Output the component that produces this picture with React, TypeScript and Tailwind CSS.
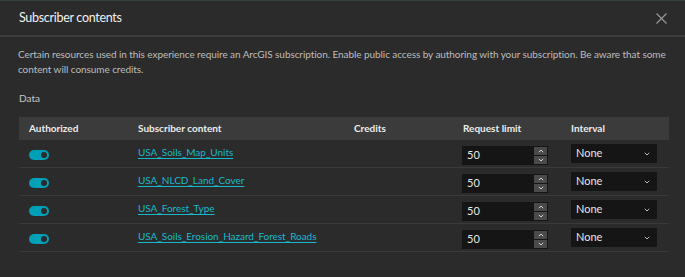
import React from "react";

const rows = [
  "USA_Soils_Map_Units",
  "USA_NLCD_Land_Cover",
  "USA_Forest_Type",
  "USA_Soils_Erosion_Hazard_Forest_Roads",
];

function Toggle() {
  return (
    <div className="w-[20px] h-[10px] rounded-full bg-[#00a0b8] flex items-center justify-end pr-[2px]">
      <div className="w-[6px] h-[6px] rounded-full bg-[#2b2b2b]" />
    </div>
  );
}

function NumberInput() {
  return (
    <div className="w-[86px] h-[19px] bg-[#151515] flex items-stretch">
      <div className="flex-1 flex items-center pl-[5px] text-[11px] text-[#e6e6e6]">50</div>
      <div className="w-[14px] flex flex-col gap-[1px] py-[1px] pr-[1px]">
        <div className="flex-1 bg-[#4a4a4a] flex items-center justify-center">
          <svg width="6" height="4" viewBox="0 0 6 4"><path d="M0.8 3.2 L3 1 L5.2 3.2" stroke="#d0d0d0" strokeWidth="1" fill="none" /></svg>
        </div>
        <div className="flex-1 bg-[#4a4a4a] flex items-center justify-center">
          <svg width="6" height="4" viewBox="0 0 6 4"><path d="M0.8 0.8 L3 3 L5.2 0.8" stroke="#d0d0d0" strokeWidth="1" fill="none" /></svg>
        </div>
      </div>
    </div>
  );
}

function Select() {
  return (
    <div className="w-[86px] h-[19px] bg-[#151515] flex items-center justify-between pl-[5px] pr-[7px] text-[11px] text-[#e6e6e6]">
      <span>None</span>
      <svg width="6" height="4" viewBox="0 0 6 4"><path d="M0.8 0.8 L3 3 L5.2 0.8" stroke="#bdbdbd" strokeWidth="1" fill="none" /></svg>
    </div>
  );
}

export default function App() {
  return (
    <div
      className="w-[685px] h-[277px] bg-[#2b2b2b] text-white overflow-hidden border-t border-[#34403c]"
      style={{ fontFamily: "Lato, 'Noto Sans', sans-serif" }}
    >
      <div className="h-[36px] flex items-center justify-between pl-[19px] pr-[18px] border-b-2 border-[#3d3d3d]">
        <span className="text-[12.5px] tracking-[-0.3px] text-[#f0f0f0]">Subscriber contents</span>
        <svg width="11" height="11" viewBox="0 0 11 11">
          <path d="M0.5 0.5 L10.5 10.5 M10.5 0.5 L0.5 10.5" stroke="#9a9a9a" strokeWidth="1.1" />
        </svg>
      </div>
      <p className="pl-[18px] pr-[18px] pt-[10px] text-[10px] tracking-[-0.07px] leading-[15px] text-[#bdbdbd]">
        Certain resources used in this experience require an ArcGIS subscription. Enable public access by authoring with your subscription. Be aware that some content will consume credits.
      </p>
      <div className="pl-[19px] pt-[14px] text-[10px] text-[#c8c8c8] leading-[14px]">Data</div>
      <div className="ml-[19px] w-[650px] mt-[12px]">
        <div className="h-[23px] bg-[#3b3b3b] grid grid-cols-[109px_216px_109px_108px_1fr] items-center pl-[10px] text-[10px] font-bold text-[#ececec]">
          <span>Authorized</span>
          <span>Subscriber content</span>
          <span>Credits</span>
          <span>Request limit</span>
          <span>Interval</span>
        </div>
        {rows.map((r) => (
          <div
            key={r}
            className="h-[28px] grid grid-cols-[109px_216px_109px_108px_1fr] items-start pl-[10px] border-b border-[#3a3a3a]"
          >
            <div className="pt-[10px]"><Toggle /></div>
            <div className="pt-[3px] leading-[14px]">
              <a className="text-[10px] tracking-[-0.05px] text-[#1ab8cc] underline underline-offset-[2px]">{r}</a>
            </div>
            <span />
            <div className="pt-[6px] -ml-[1px]"><NumberInput /></div>
            <div className="pt-[4px]"><Select /></div>
          </div>
        ))}
      </div>
    </div>
  );
}
